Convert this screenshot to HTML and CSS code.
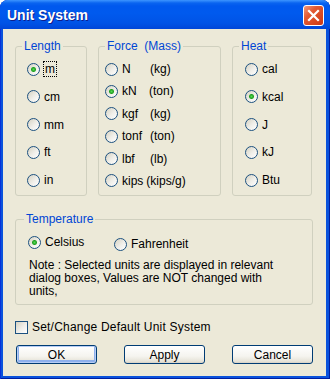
FILE: index.html
```html
<!DOCTYPE html>
<html lang="en">
<head>
    <meta charset="UTF-8" />
    <title>Unit System</title>
    <link rel="stylesheet" href="styles.css">
</head>
<body>
    <div class="window">
        <!-- Title bar -->
        <div class="titlebar">
            <span class="title">Unit System</span>
            <span class="close">
                <svg width="13" height="13" viewBox="0 0 13 13">
                    <path d="M2 2 L11 11 M11 2 L2 11" stroke="#fff" stroke-width="2.2" stroke-linecap="square" fill="none"/>
                </svg>
            </span>
        </div>

        <!-- Dialog body -->
        <div class="client">
            <div class="top-row">
                <fieldset class="group group-length">
                    <legend>Length</legend>
                    <div class="rows rows-wide">
                        <div class="opt"><span class="radio on"></span><span class="focus">m</span></div>
                        <div class="opt"><span class="radio"></span>cm</div>
                        <div class="opt"><span class="radio"></span>mm</div>
                        <div class="opt"><span class="radio"></span>ft</div>
                        <div class="opt"><span class="radio"></span>in</div>
                    </div>
                </fieldset>

                <fieldset class="group group-force">
                    <legend>Force&nbsp; (Mass)</legend>
                    <div class="rows rows-tight">
                        <div class="opt"><span class="radio"></span><span class="unit">N</span>(kg)</div>
                        <div class="opt"><span class="radio on"></span><span class="unit short">kN</span>(ton)</div>
                        <div class="opt"><span class="radio"></span><span class="unit">kgf</span>(kg)</div>
                        <div class="opt"><span class="radio"></span><span class="unit">tonf</span>(ton)</div>
                        <div class="opt"><span class="radio"></span><span class="unit">lbf</span>(lb)</div>
                        <div class="opt"><span class="radio"></span><span class="unit auto">kips</span>(kips/g)</div>
                    </div>
                </fieldset>

                <fieldset class="group group-heat">
                    <legend>Heat</legend>
                    <div class="rows rows-wide">
                        <div class="opt"><span class="radio"></span>cal</div>
                        <div class="opt"><span class="radio on"></span>kcal</div>
                        <div class="opt"><span class="radio"></span>J</div>
                        <div class="opt"><span class="radio"></span>kJ</div>
                        <div class="opt"><span class="radio"></span>Btu</div>
                    </div>
                </fieldset>
            </div>

            <fieldset class="group group-temp">
                <legend>Temperature</legend>
                <div class="temp-row">
                    <div class="opt"><span class="radio on"></span>Celsius</div>
                    <div class="opt opt-low"><span class="radio"></span>Fahrenheit</div>
                </div>
                <p class="note">Note : Selected units are displayed in relevant dialog boxes, Values are NOT changed with units,</p>
            </fieldset>

            <div class="check-row">
                <span class="checkbox"></span>Set/Change Default Unit System
            </div>

            <div class="buttons">
                <button class="btn btn-default">OK</button>
                <button class="btn">Apply</button>
                <button class="btn">Cancel</button>
            </div>
        </div>
    </div>
</body>
</html>
```

FILE: styles.css
```css
/* Basic page */
html, body {
    margin: 0;
    padding: 0;
    width: 330px;
    height: 379px;
    overflow: hidden;
    background: #ffffff;
}

body {
    font-family: "Liberation Sans", Arial, sans-serif;
    font-size: 12px;
    color: #000000;
}

/* Window frame */
.window {
    width: 330px;
    height: 379px;
    display: flex;
    flex-direction: column;
    background: #0a52dc;
    border-radius: 8px 8px 0 0;
    box-shadow: inset 1px 0 0 #0831d9, inset -1px 0 0 #001ea0, inset 0 -1px 0 #001ea0;
}

.titlebar {
    height: 29px;
    flex: none;
    display: flex;
    align-items: center;
    justify-content: space-between;
    padding: 0 6px 0 7px;
    border-radius: 8px 8px 0 0;
    background: linear-gradient(to bottom, #3d95ff 0, #0a64f0 3px, #0058ee 6px, #005aee 45%, #0053e6 80%, #0046d8 100%);
}

.title {
    color: #ffffff;
    font-weight: bold;
    font-size: 14px;
    text-shadow: 1px 1px 0 #0f1e8c;
    margin-top: 1px;
}

.close {
    width: 19px;
    height: 19px;
    border: 1px solid #ffffff;
    border-radius: 3px;
    display: flex;
    align-items: center;
    justify-content: center;
    background: linear-gradient(135deg, #f09a7e 0, #e25a34 35%, #d5421b 80%, #c8381a 100%);
    margin-top: 2px;
}

/* Client area */
.client {
    flex: 1;
    margin: 0 4px 3px 3px;
    background: #ece9d8;
    padding: 10px 13px 0 12px;
}

.top-row {
    display: flex;
    gap: 11px;
    height: 157px;
}

/* Group boxes */
.group {
    box-sizing: border-box;
    min-width: 0;
    margin: 0;
    padding: 9px 0 0 0;
    border: 1px solid #d0d0bf;
    border-radius: 3px;
}

.group legend {
    color: #0046d5;
    font-size: 12px;
    line-height: 14px;
    padding: 0 2px;
}

.group-length { width: 72px; padding-left: 11px; }
.group-length legend { margin-left: -5px; }
.group-force { width: 123px; padding-left: 6px; }
.group-force legend { margin-left: 0; }
.group-heat { width: 80px; padding-left: 12px; }
.group-heat legend { margin-left: -6px; }

.rows {
    display: flex;
    flex-direction: column;
}
.rows-wide { gap: 13.75px; }
.rows-tight { gap: 8.4px; }

.opt {
    display: flex;
    align-items: center;
    height: 14px;
    white-space: nowrap;
}

/* Radio buttons */
.radio {
    box-sizing: border-box;
    width: 13px;
    height: 13px;
    flex: none;
    border: 1px solid #1c5180;
    border-radius: 50%;
    margin-right: 4px;
    background: linear-gradient(135deg, #d6d2c2 0, #f0efea 55%, #ffffff 100%);
}

.radio.on {
    background: radial-gradient(circle at 50% 50%, #55d855 0, #21a121 2px, rgba(33, 161, 33, 0) 3px),
                linear-gradient(135deg, #d6d2c2 0, #f0efea 55%, #ffffff 100%);
}

.focus {
    outline: 1px dotted #000000;
    padding: 0 1px;
    line-height: 14px;
}

.unit {
    display: inline-block;
    width: 28px;
}
.unit.short { width: 27px; }
.unit.auto { width: auto; margin-right: 3px; }

/* Temperature */
.group-temp {
    margin-top: 16px;
    height: 93px;
    padding-left: 12px;
    padding-right: 20px;
}
.group-temp legend { margin-left: -4px; }

.temp-row {
    display: flex;
    gap: 0;
}
.temp-row .opt:first-child { width: 86px; }
.opt-low { margin-top: 2px; }

.note {
    margin: 8px 0 0 1px;
    line-height: 13px;
}

/* Checkbox */
.check-row {
    display: flex;
    align-items: center;
    height: 14px;
    margin-top: 15px;
    letter-spacing: 0.2px;
}

.checkbox {
    box-sizing: border-box;
    width: 13px;
    height: 13px;
    border: 1px solid #1c5180;
    margin-right: 4px;
    background: linear-gradient(135deg, #d6d2c2 0, #f0efea 55%, #ffffff 100%);
}

/* Buttons */
.buttons {
    display: flex;
    justify-content: space-between;
    margin: 11px 0 0 1px;
}

.btn {
    width: 81px;
    height: 19px;
    padding: 0;
    font-family: "Liberation Sans", Arial, sans-serif;
    font-size: 12px;
    color: #000000;
    border: 1px solid #003c74;
    border-radius: 3px;
    background: linear-gradient(to bottom, #ffffff 0, #f5f4ef 60%, #e6e3d8 90%, #d6d0c5 100%);
}

.btn-default {
    box-shadow: inset 0 0 0 1px #b7cdf5, inset 0 -1px 0 2px #8eb0ec;
}
```
